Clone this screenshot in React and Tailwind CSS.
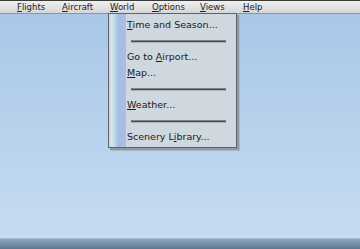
import React from 'react';

const font = { fontFamily: '"DejaVu Sans", Verdana, sans-serif' };

const U = ({ children }) => <span className="underline underline-offset-[1px]">{children}</span>;

const MenuItem = ({ children }) => (
  <div className="h-[16px] flex items-center pl-[1px] text-[9.5px] text-[#1a1a1a]">{children}</div>
);

const Separator = () => (
  <div className="h-[16px] flex items-center pl-[5px] pr-[10px]">
    <div className="w-full h-[3px] bg-[#4a4f55] border-t border-[#7d838a] border-b border-b-[#a9b0b8]" />
  </div>
);

const BarItem = ({ w, children }) => (
  <div className={w}>{children}</div>
);

export default function App() {
  return (
    <div className="w-[360px] h-[249px] flex flex-col relative overflow-hidden" style={font}>
      {/* menu bar */}
      <div className="h-[14px] flex items-center pl-[17px] border-t border-[#3a3a3a] border-b border-b-[#8f9499] bg-gradient-to-b from-[#f0f0f0] to-[#d6d6d6] text-[8.5px] text-[#222]">
        <BarItem w="w-[45px]"><U>F</U>lights</BarItem>
        <BarItem w="w-[48px]"><U>A</U>ircraft</BarItem>
        <BarItem w="w-[42px]"><U>W</U>orld</BarItem>
        <BarItem w="w-[48px]"><U>O</U>ptions</BarItem>
        <BarItem w="w-[43px]"><U>V</U>iews</BarItem>
        <BarItem w="w-[30px]"><U>H</U>elp</BarItem>
      </div>

      {/* sky area */}
      <div className="flex-1 bg-gradient-to-b from-[#a9c7e8] to-[#c6dcf0]" />

      {/* bottom bar */}
      <div className="h-[11px] border-t border-[#a9bcd0] bg-gradient-to-b from-[#8fa6bd] to-[#5c7891]" />

      {/* World dropdown */}
      <div className="absolute left-[108px] top-[13px] w-[129px] shadow-[2px_2px_0_#8d99a6,3px_3px_0_#aab6c2]">
        <div className="flex border border-[#5e636a] bg-[#cfd7df]">
          <div className="w-[15px] ml-[2px] bg-gradient-to-r from-[#d8eef0] via-[#9ec0e0] to-[#b6b8e6]" />
          <div className="flex-1 pt-[3px] pb-[1px]">
            <MenuItem><span><U>T</U>ime and Season...</span></MenuItem>
            <Separator />
            <MenuItem><span>Go to <U>A</U>irport...</span></MenuItem>
            <MenuItem><span><U>M</U>ap...</span></MenuItem>
            <Separator />
            <MenuItem><span><U>W</U>eather...</span></MenuItem>
            <Separator />
            <div className="h-[17px] flex items-end pb-[2px] pl-[1px] text-[9.5px] text-[#1a1a1a]">
              <span>Scenery L<U>i</U>brary...</span>
            </div>
          </div>
        </div>
      </div>
    </div>
  );
}
